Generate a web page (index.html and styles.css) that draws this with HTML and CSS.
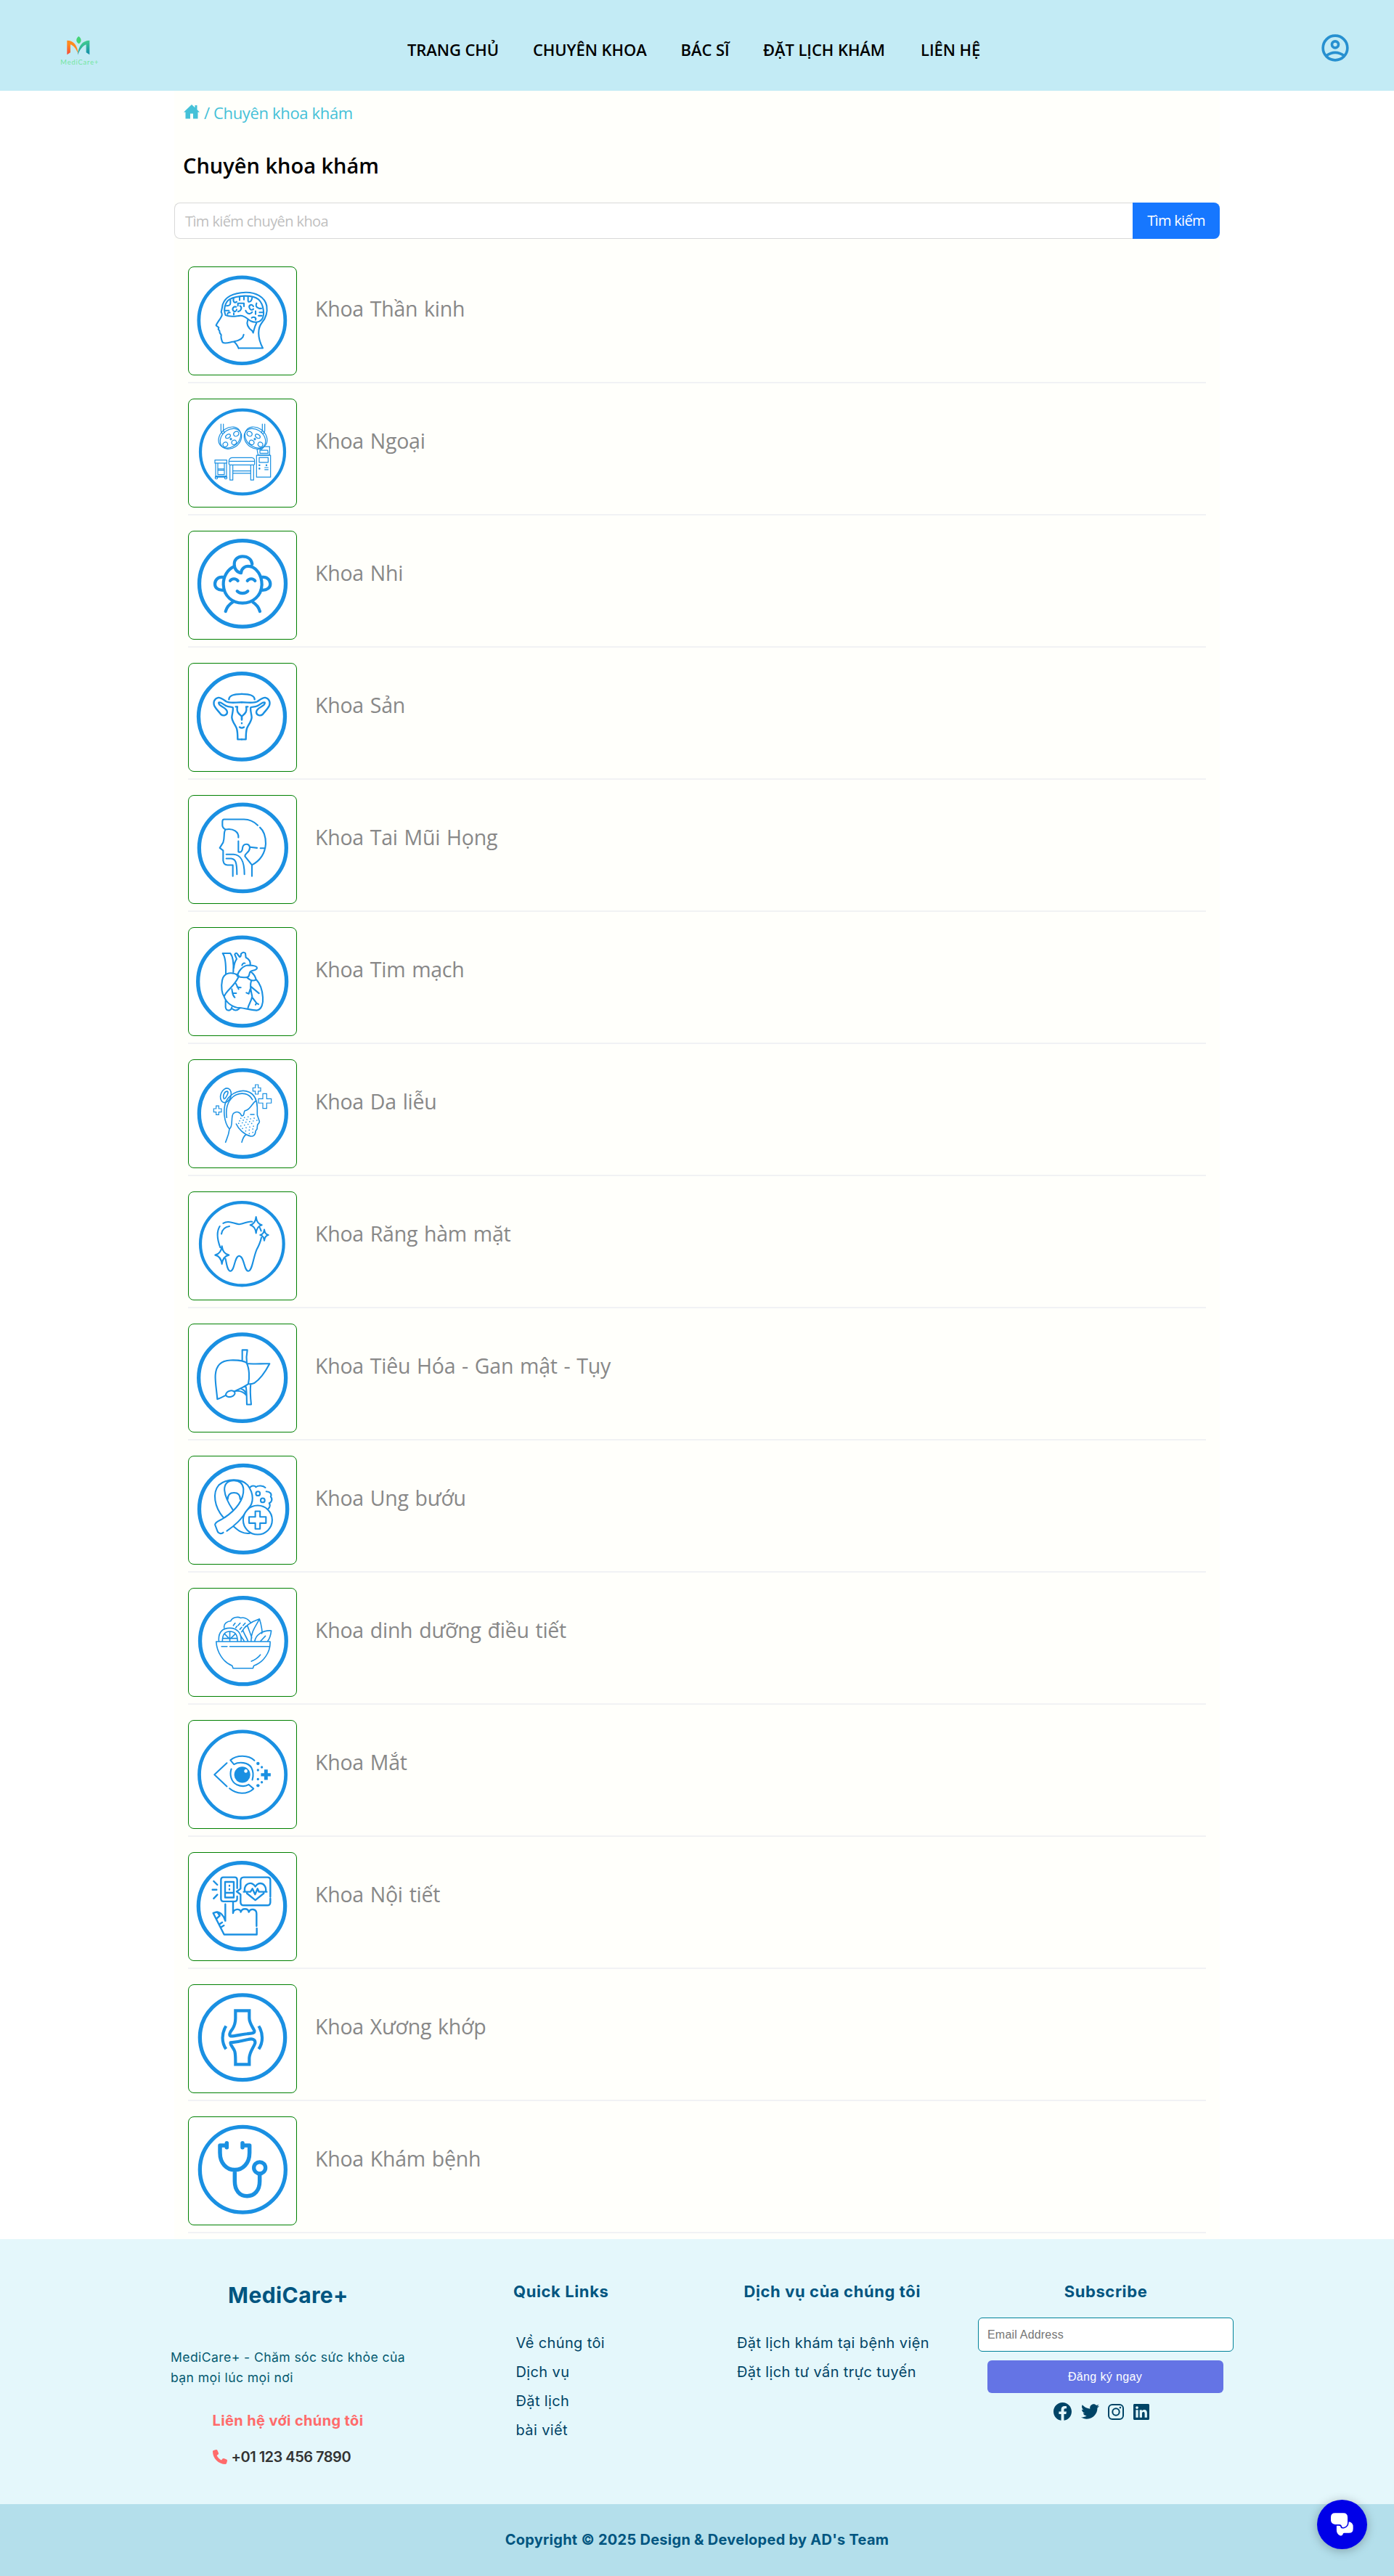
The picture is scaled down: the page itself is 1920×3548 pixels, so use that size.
FILE: index.html
```html
<!DOCTYPE html>
<html lang="vi">
<head>
<meta charset="utf-8">
<title>Chuyên khoa khám</title>
<link rel="stylesheet" href="styles.css">
</head>
<body>
<header class="header">
  <svg class="logo" viewBox="0 0 300 240">
    <defs>
      <linearGradient id="warm" x1="0" y1="1" x2="0.6" y2="0"><stop offset="0" stop-color="#f4433c"/><stop offset="0.6" stop-color="#ff8a1e"/></linearGradient>
      <linearGradient id="cool" x1="0" y1="0" x2="0.3" y2="1"><stop offset="0" stop-color="#4fdc86"/><stop offset="1" stop-color="#1795a8"/></linearGradient>
    </defs>
    <path fill="url(#warm)" d="M97 136V77C124 77 140 96 144 134C134 110 122 97 111 94V127Z"/>
    <path fill="url(#cool)" d="M190 136V77C160 77 144 100 141 137C152 112 163 99 176 94V127Z"/>
    <path fill="#43d477" d="M145 60C158 69 158 83 146 91C132 83 133 69 145 60Z"/>
    <text class="logo-text" x="70" y="176" textLength="156">MediCare+</text>
  </svg>
  <nav class="nav">
    <a>TRANG CHỦ</a><a>CHUYÊN KHOA</a><a>BÁC SĨ</a><a>ĐẶT LỊCH KHÁM</a><a>LIÊN HỆ</a>
  </nav>
  <svg class="user" viewBox="0 0 114 114" fill="none" stroke="#2790d0" stroke-width="11">
    <circle cx="57" cy="57" r="50.5"/><circle cx="57" cy="43" r="13.5"/><path d="M20 89Q57 63 94 89"/>
  </svg>
</header>

<main class="page">
  <div class="crumbs">
    <svg class="home" viewBox="0 0 22 20"><path fill="#45c1d8" d="M11 0L15.500 4.200V1H18.500V7L22 10.500H19.500V19.500H13V12.500H9V19.500H2.500V10.500H0Z"/></svg>
    <span>/ Chuyên khoa khám</span>
  </div>
  <h1 class="title">Chuyên khoa khám</h1>
  <div class="search"><div class="search-input">Tìm kiếm chuyên khoa</div><button class="search-btn">Tìm kiếm</button></div>

  <ul class="list">
    <li class="item">
      <svg class="pic" viewBox="90 50.800 444 414.400" preserveAspectRatio="none">
        <ellipse class="w45" cx="310" cy="256" rx="178.500" ry="166"/>
        <g class="w2">
          <path d="M296 363H396C372 320 375 285 392 265C410 245 416 225 412 200C404 165 365 147 325 148C275 150 240 165 230 195C228 210 225 218 224 224C230 232 228 238 222 246C214 258 206 268 203 275C206 279 212 281 214 284L212 290L217 296C216 303 220 308 224 312C222 320 226 335 230 341C240 348 260 340 275 338C300 334 315 325 317 311M276 338C288 345 292 355 296 364"/>
          <path d="M242 236C232 215 240 185 258 175C290 160 350 155 378 175C400 195 405 235 392 252C380 266 360 265 345 258C330 250 320 235 300 238C280 240 260 244 242 236ZM334 254C325 275 340 288 352 296L356 304C360 290 362 280 370 266"/>
          <path d="M262 178V188M246 200C254 200 262 196 262 190M275 172C272 186 280 190 288 184M300 166V178M318 164V176M335 165V180M352 168C350 180 345 186 336 184M286 204C274 200 268 212 274 219C280 225 288 220 288 214M293 200V190H318V202M302 200C312 206 306 220 294 222M357 202C350 190 338 198 340 206C342 216 352 218 357 212M370 190C365 200 370 206 378 208M390 210H380M395 225H382M392 238H378M325 218C330 232 346 234 352 224M366 220V232M350 246C360 240 370 246 366 254M242 218H256M250 232C252 224 258 224 260 226M276 234V228"/>
        </g>
      </svg>
      <span class="name">Khoa Thần kinh</span>
    </li>
    <li class="item">
      <svg class="pic" viewBox="90 559.800 444 414.400" preserveAspectRatio="none">
        <ellipse class="w4" cx="312" cy="763" rx="174" ry="162"/>
        <g class="w1">
          <g id="lamp">
            <path d="M223 655V682L230 694M233 655V682L238 688"/>
            <ellipse cx="259" cy="707" rx="49" ry="37" transform="rotate(-32 259 707)"/>
            <ellipse cx="264" cy="712" rx="47" ry="36" transform="rotate(-32 264 712)"/>
            <ellipse cx="252" cy="702" rx="11" ry="7" transform="rotate(-32 252 702)"/>
            <ellipse cx="286" cy="693" rx="11" ry="9" transform="rotate(-32 286 693)"/>
            <ellipse cx="241" cy="734" rx="10" ry="9" transform="rotate(-32 241 734)"/>
            <ellipse cx="277" cy="726" rx="10" ry="9" transform="rotate(-32 277 726)"/>
            <circle cx="264" cy="713" r="3"/>
          </g>
          <use href="#lamp" transform="translate(627 0) scale(-1 1)"/>
          <path d="M256 808V797Q258 785 270 785H350Q362 786 362 797V808Q362 813 354 813H264Q256 813 256 808ZM256 799H362M260 813V871H272V813M346 813V871H358V813M272 836H346M272 845H346"/>
          <path d="M198 794H247V806H198ZM201 806V860H246V806M210 808V850H237V808M210 828H237M210 833H237M201 856H246"/><circle cx="204" cy="862" r="5"/><circle cx="243" cy="862" r="5"/>
          <path d="M376 774L372 752H392L402 742H424V774ZM384 768V756H416L418 768ZM370 776H428V860H370ZM381 784H418V803H381ZM404 823H418M404 831H418"/><circle cx="382" cy="814" r="2"/><circle cx="382" cy="827" r="2"/><circle cx="411" cy="814" r="2"/>
        </g>
      </svg>
      <span class="name">Khoa Ngoại</span>
    </li>
    <li class="item">
      <svg class="pic" viewBox="90 1069.800 444 414.400" preserveAspectRatio="none">
        <ellipse class="w5" cx="312" cy="1271" rx="178.500" ry="166"/>
        <g class="w4">
          <path d="M352 1196C350 1178 335 1166 312 1166C290 1166 278 1180 278 1196C278 1215 290 1228 306 1230C308 1210 325 1200 345 1205"/>
          <path d="M278 1205C250 1215 232 1245 233 1275C235 1320 270 1346 312 1346C355 1346 390 1318 392 1275C392 1240 372 1212 345 1204"/>
          <path d="M230 1246C210 1244 198 1258 198 1272C198 1286 210 1298 234 1296M394 1246C414 1244 427 1258 427 1272C427 1286 414 1298 390 1296M261 1260C268 1250 285 1250 293 1260M332 1260C340 1250 356 1250 364 1260M290 1300C300 1311 324 1311 334 1300M272 1342C258 1350 246 1365 242 1378M354 1342C368 1350 380 1365 384 1378"/>
        </g>
      </svg>
      <span class="name">Khoa Nhi</span>
    </li>
    <li class="item">
      <svg class="pic" viewBox="90 39.800 444 414.400" preserveAspectRatio="none">
        <ellipse class="w5" cx="309" cy="244" rx="178.500" ry="166"/>
        <g class="w25">
          <g id="uterus-half">
            <path d="M256 178C256 160 285 157 309 157M309 189C280 189 262 194 245 186C232 178 222 170 212 171C195 174 190 190 196 203C202 215 215 225 222 235C232 243 248 240 249 228C249 218 240 212 230 207C220 202 212 196 214 190C222 186 232 198 245 203C255 208 268 206 272 209C275 222 268 235 268 248C270 265 282 275 288 290C292 303 292 320 292 332H309M284 206H291C286 228 297 233 309 243V256"/>
          </g>
          <use href="#uterus-half" transform="translate(618 0) scale(-1 1)"/>
          <path d="M309 269V270M300 285Q309 291 318 285"/>
        </g>
      </svg>
      <span class="name">Khoa Sản</span>
    </li>
    <li class="item">
      <svg class="pic" viewBox="90 549.800 444 414.400" preserveAspectRatio="none">
        <ellipse class="w5" cx="313" cy="751" rx="180" ry="167.500"/>
        <path class="w2" d="M375 664C360 650 340 641 318 641H236Q229 641 229 650V664Q230 674 242 680C232 690 240 710 232 730L218 751L232 761V800Q235 817 250 817H272V860M242 680C275 674 297 690 295 711M295 725V766C305 770 312 763 312 752C314 732 342 732 342 750C342 770 322 770 322 783L351 817V860M351 817C385 800 405 775 408 735C408 705 400 685 384 672M344 748L372 751M386 752H406M245 776H275C305 778 320 800 320 853M245 792H265C282 794 289 803 289 853"/>
      </svg>
      <span class="name">Khoa Tai Mũi Họng</span>
    </li>
    <li class="item">
      <svg class="pic" viewBox="90 1059.800 444 414.400" preserveAspectRatio="none">
        <ellipse class="w5" cx="311" cy="1267" rx="183" ry="170.500"/>
        <path class="w2" d="M230 1158H262C272 1170 276 1200 274 1230M230 1158C242 1172 244 1200 243 1238M276 1215C278 1195 284 1185 288 1180L280 1162Q286 1152 292 1162L300 1172Q306 1172 306 1160Q316 1150 324 1158L326 1174C338 1180 346 1190 344 1203M310 1204Q314 1194 322 1196M290 1245C295 1225 315 1205 335 1204C350 1204 372 1205 372 1214C372 1225 355 1222 345 1228C336 1235 345 1250 330 1250C315 1252 300 1250 290 1245M345 1228Q364 1240 368 1260Q350 1268 332 1252M296 1244C270 1228 235 1230 228 1262C222 1290 228 1315 236 1325C244 1300 275 1290 296 1248M236 1325C245 1350 275 1368 300 1368C320 1370 350 1376 370 1378C392 1375 398 1350 396 1328C394 1295 380 1270 368 1258M348 1264C340 1290 350 1310 352 1325C345 1350 335 1360 335 1368M268 1296C272 1315 270 1320 280 1328M272 1312H286M285 1275L296 1296M290 1288L305 1290M345 1285L362 1298L380 1312M344 1296L338 1314L328 1310M354 1330L370 1350L366 1356M370 1350L378 1354M242 1340V1365Q243 1378 256 1378Q266 1376 268 1366M270 1372Q285 1384 300 1370"/>
      </svg>
      <span class="name">Khoa Tim mạch</span>
    </li>
    <li class="item">
      <svg class="pic" viewBox="90 29 444 422" preserveAspectRatio="none">
        <ellipse class="w5" cx="313" cy="239" rx="180" ry="170.500"/>
        <g class="w15">
          <ellipse cx="243" cy="168" rx="21" ry="29" transform="rotate(22 243 168)"/><path d="M236 182C228 170 238 150 250 152C256 156 248 170 240 180"/>
          <path d="M258 300C235 275 230 220 245 190C265 155 310 142 340 155C362 165 372 185 373 215V245L382 270C383 277 375 280 374 284L372 300L366 308C366 325 355 330 345 328C320 322 295 300 286 280M247 255C240 215 255 180 285 166C310 155 340 160 353 185M258 300C275 290 262 250 275 238C290 228 303 234 308 248C322 250 315 235 322 228C345 225 350 200 366 190M258 300C255 325 246 340 242 352M326 322C315 330 312 340 309 352M345 243H360"/>
          <path class="w1 butt" d="M365 126H377V138H387V151H377V163H365V151H355V138H365ZM396 161H412V181H431V198H412V219H396V198H378V181H396ZM203 209H214V220H225V233H214V244H203V233H193V220H203Z"/>
          <path class="dots" d="M305 258L345 250M300 268L368 256M296 278L372 266M305 288L360 276M312 298L362 288M325 308L362 298M340 318L358 312"/>
        </g>
      </svg>
      <span class="name">Khoa Da liễu</span>
    </li>
    <li class="item">
      <svg class="pic" viewBox="90 548 444 422" preserveAspectRatio="none">
        <ellipse class="w4" cx="310" cy="751" rx="172" ry="163"/>
        <path class="w2" d="M232 670C255 657 275 672 298 674C320 673 335 660 352 664M390 726C386 745 380 757 370 775C355 810 352 858 336 858C318 858 320 800 298 798C278 800 280 858 262 858C250 858 246 830 242 810M218 682C200 710 212 745 220 765M225 712C228 695 240 684 258 682M368 645Q371 672 392 677Q371 682 368 709Q365 682 344 677Q365 672 368 645ZM402 695Q404 713 419 716Q404 719 402 738Q400 719 385 716Q400 713 402 695ZM227 760Q231 790 256 795Q231 800 227 830Q223 800 199 795Q223 790 227 760ZM384 688L389 700"/>
      </svg>
      <span class="name">Khoa Răng hàm mặt</span>
    </li>
    <li class="item">
      <svg class="pic" viewBox="90 1066 444 422" preserveAspectRatio="none">
        <ellipse class="w5" cx="311" cy="1276" rx="180" ry="170.500"/>
        <g class="w2">
          <path d="M208 1360C205 1325 198 1290 200 1265C203 1225 225 1208 262 1207C300 1206 325 1212 330 1220C340 1240 342 1275 336 1300C310 1318 285 1325 265 1335C240 1345 225 1355 208 1360ZM330 1220C360 1223 395 1220 424 1221C405 1255 380 1285 362 1296C350 1301 340 1301 336 1300M311 1210V1167H332C328 1185 328 1205 330 1220M346 1300C342 1330 345 1355 348 1381H330C329 1355 330 1330 326 1310M282 1328C305 1325 320 1335 328 1345M308 1320Q322 1325 328 1340"/>
          <ellipse class="white" cx="262" cy="1339" rx="19" ry="12" transform="rotate(-15 262 1339)"/>
        </g>
      </svg>
      <span class="name">Khoa Tiêu Hóa - Gan mật - Tụy</span>
    </li>
    <li class="item">
      <svg class="pic" viewBox="73.500 44.800 362.600 414.400" preserveAspectRatio="none">
        <ellipse class="w5" cx="257.500" cy="247.500" rx="148.500" ry="168"/>
        <g class="w2">
          <path d="M190 280C160 240 152 185 175 155C200 130 250 128 272 155C295 190 292 225 275 245C250 290 230 310 202 332M190 338C185 345 172 342 170 332L162 308C162 295 185 290 195 280C235 250 260 210 258 170C256 150 245 138 226 138C205 138 193 150 194 175C196 200 210 230 222 250M205 210C205 195 212 185 226 185C240 185 247 195 247 210M225 315C240 330 255 345 280 341M280 165C285 155 298 158 300 163C308 155 325 158 332 165M335 180C348 180 355 190 350 200C358 210 352 222 345 225C350 235 346 242 342 246"/>
          <ellipse cx="307" cy="188" rx="7" ry="8"/><ellipse cx="323" cy="214" rx="7" ry="8"/>
          <ellipse class="white" cx="306" cy="290" rx="49" ry="56"/>
          <path d="M298 256H314V278H334V302H314V324H298V302H277V278H298Z"/>
        </g>
      </svg>
      <span class="name">Khoa Ung bướu</span>
    </li>
    <li class="item">
      <svg class="pic" viewBox="73.500 554.800 362.600 414.400" preserveAspectRatio="none">
        <ellipse class="w5" cx="257" cy="757" rx="145.500" ry="166.500"/>
        <path class="w15" d="M166 759H348C350 800 325 840 293 852L290 862H223L220 852C190 840 168 800 166 759ZM184 778H203M212 778H344M285 835Q305 825 315 810M175 757C172 720 190 707 212 707C235 707 252 725 250 757M187 757C187 735 195 720 212 720C230 720 238 735 238 757M212 720V757M195 730L212 750L230 730M188 747H237M193 706C190 690 205 680 215 680C220 665 240 662 248 668C262 664 275 675 282 685M252 722C262 700 280 685 312 672C320 700 322 725 320 728M248 735C255 750 258 750 260 757M256 715C262 735 270 745 273 757M284 757C283 720 300 700 312 672M272 700C280 725 284 735 286 745M296 757C300 735 320 715 352 717C350 735 345 750 340 757M316 757L332 738M224 697L230 688M240 697L247 688M257 697L264 688M232 706L236 700M246 712L252 704M262 706L266 700"/>
      </svg>
      <span class="name">Khoa dinh dưỡng điều tiết</span>
    </li>
    <li class="item">
      <svg class="pic" viewBox="73.500 1063.800 362.600 414.400" preserveAspectRatio="none">
        <ellipse class="w45" cx="255" cy="1272" rx="146" ry="166.500"/>
        <path class="w2" d="M202 1227L160 1272L202 1317M295 1217C275 1195 235 1195 214 1216L226 1232C245 1220 275 1225 285 1245C292 1260 292 1275 288 1292M217 1250C210 1275 218 1300 235 1310C250 1318 265 1318 276 1310L292 1326C270 1350 235 1348 211 1325"/>
        <g class="solid">
          <ellipse cx="254" cy="1272" rx="27" ry="31"/>
          <ellipse cx="307" cy="1229" rx="5.500" ry="6"/><ellipse cx="320" cy="1243" rx="4" ry="5"/><ellipse cx="307" cy="1254" rx="4" ry="5"/><ellipse cx="307" cy="1289" rx="4" ry="5"/><ellipse cx="320" cy="1301" rx="4" ry="5"/><ellipse cx="307" cy="1314" rx="5.500" ry="6"/>
          <path d="M328 1252H340V1266H350V1278H340V1292H328V1278H317V1266H328Z"/>
        </g>
        <ellipse class="shine" cx="266" cy="1258" rx="5.500" ry="7"/>
      </svg>
      <span class="name">Khoa Mắt</span>
    </li>
    <li class="item">
      <svg class="pic" viewBox="90 33.800 444 414.400" preserveAspectRatio="none">
        <ellipse class="w5" cx="309" cy="239" rx="179" ry="167"/>
        <path class="w25" d="M193 143L208 157M188 176H205M208 195L193 210M290 170V138Q290 128 280 128H233Q223 128 223 138V210Q223 221 233 221H280Q290 221 290 210V202M240 146H276V206H240ZM258 160V161M258 174V175M240 188H276M427 203V140Q427 128 415 128H317Q304 128 304 142V172L288 183L304 194V224Q304 236 317 236H415Q427 236 427 224V210M322 184C316 160 335 148 350 152Q360 156 365 164Q370 156 380 152C398 148 412 165 408 184M330 190L365 216L400 190M317 184H345L353 172L364 194L374 172L380 184H412M241 232V296C235 275 220 262 205 262L191 266L236 349H371V325M273 222V266C275 250 303 246 305 262C310 246 335 246 338 262C345 246 370 250 370 268V316M204 288L218 276L208 262M218 308L228 302M224 320L235 314"/>
      </svg>
      <span class="name">Khoa Nội tiết</span>
    </li>
    <li class="item">
      <svg class="pic" viewBox="90 543.800 444 414.400" preserveAspectRatio="none">
        <ellipse class="w5" cx="312" cy="746" rx="176" ry="163.500"/>
        <path class="w4 butt" d="M283 643H340V672C340 690 355 708 361 720C363 732 345 730 330 732C300 735 280 742 264 741C255 738 260 725 267 718C278 705 283 690 283 672ZM283 850H340V825C342 800 358 785 364 768C366 752 350 750 335 754C310 760 285 764 263 766C258 772 275 785 280 800C284 815 283 835 283 850ZM244 702C225 730 225 765 244 791M379 702C398 730 398 765 379 791"/>
      </svg>
      <span class="name">Khoa Xương khớp</span>
    </li>
    <li class="item">
      <svg class="pic" viewBox="90 1052.800 444 414.400" preserveAspectRatio="none">
        <ellipse class="w5" cx="313" cy="1255" rx="177" ry="165"/>
        <path class="w55" d="M247 1162H219V1190C219 1230 245 1256 280 1256C315 1256 341 1230 341 1190V1162H312M247 1153V1170M312 1153V1170M280 1256V1300C280 1335 300 1357 331 1357C362 1357 383 1335 383 1300V1275"/>
        <ellipse class="w5" cx="383" cy="1248" rx="24" ry="22"/>
      </svg>
      <span class="name">Khoa Khám bệnh</span>
    </li>
  </ul>
</main>

<footer class="footer">
  <section>
    <h2 class="brand">MediCare+</h2>
    <p class="about">MediCare+ - Chăm sóc sức khỏe của<br>bạn mọi lúc mọi nơi</p>
    <p class="contact">Liên hệ với chúng tôi</p>
    <p class="phone"><svg viewBox="0 0 512 512" width="20" height="20"><path fill="#ff6b6b" d="M164.900 24.600c-7.700-18.600-28-28.500-47.400-23.200l-88 24C12.100 30.200 0 46 0 64C0 311.400 200.600 512 448 512c18 0 33.800-12.100 38.600-29.500l24-88c5.300-19.400-4.600-39.700-23.200-47.400l-96-40c-16.300-6.800-35.200-2.100-46.300 11.600L304.700 368C234.300 334.700 177.300 277.700 144 207.300L193.300 167c13.700-11.200 18.400-30 11.600-46.300l-40-96z"/></svg>+01 123 456 7890</p>
  </section>
  <section>
    <h3 class="head">Quick Links</h3>
    <ul class="links quick"><li>Về chúng tôi</li><li>Dịch vụ</li><li>Đặt lịch</li><li>bài viết</li></ul>
  </section>
  <section>
    <h3 class="head services">Dịch vụ của chúng tôi</h3>
    <ul class="links"><li>Đặt lịch khám tại bệnh viện</li><li>Đặt lịch tư vấn trực tuyến</li></ul>
  </section>
  <section class="subscribe">
    <h3 class="head">Subscribe</h3>
    <div class="email">Email Address</div>
    <button class="join">Đăng ký ngay</button>
    <div class="social">
      <svg viewBox="8 8 496 496" width="25" height="25"><path d="M504 256C504 119 393 8 256 8S8 119 8 256c0 123.780 90.690 226.380 209.250 245V327.690h-63V256h63v-54.640c0-62.150 37-96.480 93.670-96.480 27.140 0 55.520 4.840 55.520 4.840v61h-31.280c-30.800 0-40.410 19.120-40.410 38.730V256h68.780l-11 71.690h-57.780V501C413.310 482.380 504 379.780 504 256z"/></svg>
      <svg viewBox="0 0 512 512" width="25" height="25"><path d="M459.370 151.716c.325 4.548.325 9.097.325 13.645 0 138.720-105.583 298.558-298.558 298.558-59.452 0-114.680-17.219-161.137-47.106 8.447.974 16.568 1.299 25.340 1.299 49.055 0 94.213-16.568 130.274-44.832-46.132-.975-84.792-31.188-98.112-72.772 6.498.974 12.995 1.624 19.818 1.624 9.421 0 18.843-1.300 27.614-3.573-48.081-9.747-84.143-51.980-84.143-102.985v-1.299c13.969 7.797 30.214 12.670 47.431 13.319-28.264-18.843-46.781-51.005-46.781-87.391 0-19.492 5.197-37.360 14.294-52.954 51.655 63.675 129.300 105.258 216.365 109.807-1.624-7.797-2.599-15.918-2.599-24.040 0-57.828 46.782-104.934 104.934-104.934 30.213 0 57.502 12.670 76.670 33.137 23.715-4.548 46.456-13.320 66.599-25.340-7.798 24.366-24.366 44.833-46.132 57.827 21.117-2.273 41.584-8.122 60.426-16.243-14.292 20.791-32.161 39.308-52.628 54.253z"/></svg>
      <svg viewBox="0 0 22 22" width="22" height="22"><rect x="1" y="1" width="20" height="20" rx="5" fill="none" stroke="#004466" stroke-width="2"/><circle cx="11" cy="11" r="4.700" fill="none" stroke="#004466" stroke-width="2"/><circle cx="16.900" cy="5.100" r="1.300"/></svg>
      <svg viewBox="0 32 448 448" width="22" height="22"><path d="M416 32H31.900C14.300 32 0 46.500 0 64.300v383.400C0 465.500 14.300 480 31.900 480H416c17.600 0 32-14.500 32-32.300V64.300c0-17.800-14.400-32.300-32-32.300zM135.400 416H69V202.200h66.500V416zm-33.200-243c-21.300 0-38.500-17.300-38.500-38.500S80.900 96 102.200 96c21.200 0 38.500 17.300 38.500 38.500 0 21.300-17.200 38.500-38.500 38.500zm282.100 243h-66.400V312c0-24.800-.5-56.700-34.500-56.700-34.600 0-39.900 27-39.900 54.900V416h-66.400V202.200h63.700v29.200h.9c8.900-16.800 30.600-34.500 62.900-34.500 67.200 0 79.700 44.300 79.700 101.900V416z"/></svg>
    </div>
  </section>
</footer>
<div class="copyright">Copyright © 2025 Design &amp; Developed by AD's Team</div>

<div class="chat">
  <svg viewBox="0 0 94 96" width="31" height="32" fill="#fff"><path d="M18 0H52Q70 0 70 18V40Q70 56 54 60Q48 61 46 58Q45 49 36 48H18Q0 46 0 30V18Q0 0 18 0Z"/><path d="M75 37Q93 40 93 58V66Q93 84 75 84H56Q50 84 50 90Q46 98 38 94Q24 88 24 72V53H34Q41 53 42 62Q45 66 56 64Q75 60 75 37Z"/></svg>
</div>
</body>
</html>
```
FILE: styles.css
```css
* { box-sizing: border-box; }
body { margin: 0; position: relative; background: #fff; font-family: "Open Sans", "Noto Sans", sans-serif; }
h1, h2, h3, p, ul { margin: 0; padding: 0; list-style: none; }
button { border: 0; padding: 0; }
svg { display: block; flex: none; }

.header { display: flex; height: 125px; padding-left: 60px; background: #c3ebf5; }
.logo { width: 100px; height: 80px; margin-top: 30px; }
.logo-text { font: 400 28px Lato, sans-serif; fill: #72e6a0; }
.nav { display: grid; grid-template-columns: 173px 203.5px 113.5px 217px 551px; margin: 53px 0 0 401px; font-size: 22px; font-weight: 600; line-height: 30px; letter-spacing: -0.08px; color: #000; white-space: nowrap; }
.user { width: 38px; height: 38px; margin: 47px 0 0 1px; }

.page { width: 1440px; height: 2959px; margin: 0 auto; padding-top: 15px; background: #fffffb; }
.crumbs { display: flex; gap: 6px; height: 30px; padding-left: 13px; font-size: 22px; line-height: 30px; letter-spacing: -0.35px; color: #45c1d8; }
.home { width: 22px; height: 20px; margin-top: 4px; }
.title { margin: 38px 0 0 12px; font-size: 29px; font-weight: 600; line-height: 40px; letter-spacing: 0; color: #000; }
.search { display: flex; height: 50px; margin-top: 31px; font-size: 20px; }
.search-input { flex: 1; padding-left: 14px; border: 1px solid #d9d9d9; border-right: 0; border-radius: 8px 0 0 8px; background: #fff; line-height: 49px; letter-spacing: -0.6px; color: #bfbfbf; }
.search-btn { width: 120px; border-radius: 0 8px 8px 0; background: #1677ff; font: inherit; line-height: 50px; letter-spacing: -0.7px; color: #fff; }

.list { padding: 38px 19px 0; }
.item { display: flex; gap: 25px; height: 161px; margin-bottom: 21px; border-bottom: 2px solid #f1f2f4; }
.pic { width: 150px; height: 150px; border: 1px solid #008000; border-radius: 8px; background: #fff; overflow: visible; fill: none; stroke: #1a90e2; stroke-linecap: round; stroke-linejoin: round; }
.pic * { vector-effect: non-scaling-stroke; }
.w1 { stroke-width: 1.2px; }
.w15 { stroke-width: 1.6px; }
.w2 { stroke-width: 2.1px; }
.w25 { stroke-width: 2.4px; }
.w4 { stroke-width: 4.2px; }
.w45 { stroke-width: 4.8px; }
.w5 { stroke-width: 5.3px; }
.w55 { stroke-width: 5.5px; }
.butt { stroke-linecap: butt; stroke-linejoin: miter; }
.dots { stroke-width: 1.6px; stroke-dasharray: 0.1 5; }
.white { fill: #fff; }
.solid { fill: #1a90e2; stroke: none; }
.shine { fill: #fff; stroke: none; }
.name { margin-top: 37.5px; font-size: 28.5px; line-height: 40px; letter-spacing: -0.25px; word-spacing: 1.7px; color: #888; white-space: nowrap; }

.footer { display: grid; grid-template-columns: 472px 308px 332px 352px; height: 365px; padding: 57px 0 0 235px; background: #e4f7fb; font-family: Inter, sans-serif; }
.brand { width: 324px; font-size: 30px; line-height: 40px; letter-spacing: 0.4px; text-align: center; color: #005580; }
.about { margin-top: 52px; font-size: 17.6px; line-height: 28px; letter-spacing: 0.4px; white-space: nowrap; color: #045a70; }
.contact { margin: 30px 0 0 57.5px; font-size: 20px; font-weight: 700; line-height: 30px; letter-spacing: 0.37px; color: #ff6b6b; }
.phone { display: flex; align-items: center; gap: 6px; margin: 20px 0 0 57.5px; font-size: 20px; font-weight: 600; line-height: 30px; letter-spacing: -0.5px; color: #333; }
.head { font-size: 22px; line-height: 30px; letter-spacing: 0.6px; color: #005580; white-space: nowrap; }
.services { padding-left: 9.5px; }
.links { margin-top: 35.5px; font-size: 20px; line-height: 40px; letter-spacing: 0.38px; color: #004466; white-space: nowrap; }
.quick { padding-left: 3.5px; }
.subscribe { display: flex; flex-direction: column; align-items: center; }
.email { width: 352px; height: 47px; margin-top: 21px; padding-left: 12px; border: 1px solid #008299; border-radius: 6px; background: #fff; font: 16px/45px "Liberation Sans", sans-serif; letter-spacing: 0.2px; color: #757575; }
.join { width: 325px; height: 45px; margin: 12px 2px 0 0; border-radius: 6px; background: #6474e5; font: 16px/45px "Liberation Sans", sans-serif; letter-spacing: 0.35px; color: #fff; }
.social { display: flex; align-items: center; gap: 12.5px; height: 25px; margin: 13px 12px 0 0; fill: #004466; }
.copyright { height: 99px; background: #b4dfeb; font: 700 20px/99px Inter, sans-serif; letter-spacing: 0.26px; text-align: center; color: #005580; }

.chat { position: absolute; right: 37px; bottom: 37px; display: flex; align-items: center; justify-content: center; width: 69px; height: 68px; border-radius: 50%; background: #0000e8; box-shadow: 0 2px 14px rgba(0, 0, 0, 0.28); }
```
